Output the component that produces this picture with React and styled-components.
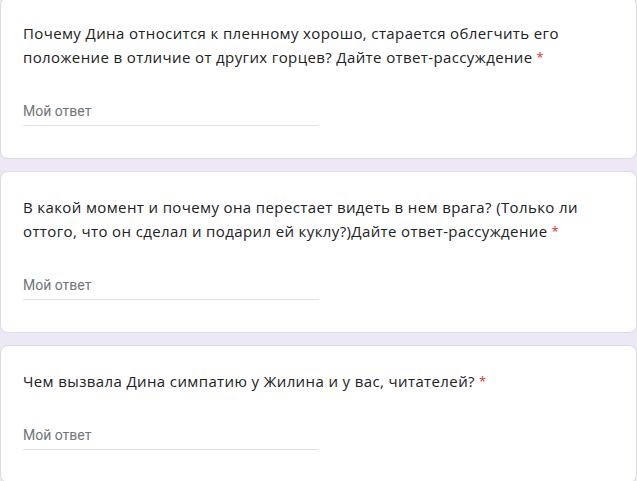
import React from 'react';
import styled, { createGlobalStyle } from 'styled-components';

const GlobalStyle = createGlobalStyle`
  html, body {
    margin: 0;
    padding: 0;
    background: #ede7f6;
    overflow: hidden;
  }
`;

const Page = styled.div`
  display: flex;
  flex-direction: column;
  gap: 12px;
  margin-top: -3px;
  width: 637px;
`;

const Card = styled.div`
  background: #fff;
  border: 1px solid #dadce0;
  border-radius: 8px;
  padding: 23px 22px 32px 22px;
`;

const Title = styled.div`
  font-family: "Open Sans", sans-serif;
  font-size: 15px;
  letter-spacing: 0.38px;
  line-height: 24px;
  color: #202124;
  max-width: 575px;
`;

const Required = styled.span`
  color: #d93025;
  font-size: 13px;
  margin-left: 4px;
  vertical-align: 1px;
`;

const AnswerField = styled.div`
  margin-top: 28px;
  width: 296px;
  height: 28px;
  line-height: 28px;
  border-bottom: 1px solid #e0e0e0;
  font-family: Roboto, sans-serif;
  font-size: 14px;
  color: #70757a;
`;

const questions = [
  'Почему Дина относится к пленному хорошо, старается облегчить его положение в отличие от других горцев? Дайте ответ-рассуждение',
  'В какой момент и почему она перестает видеть в нем врага? (Только ли оттого, что он сделал и подарил ей куклу?)Дайте ответ-рассуждение',
  'Чем вызвала Дина симпатию у Жилина и у вас, читателей?',
];

const App = () => {
  return (
    <>
      <GlobalStyle />
      <Page>
        {questions.map((q, i) => (
          <Card key={i}>
            <Title>
              {q}
              <Required>*</Required>
            </Title>
            <AnswerField>Мой ответ</AnswerField>
          </Card>
        ))}
      </Page>
    </>
  );
};

export default App;
